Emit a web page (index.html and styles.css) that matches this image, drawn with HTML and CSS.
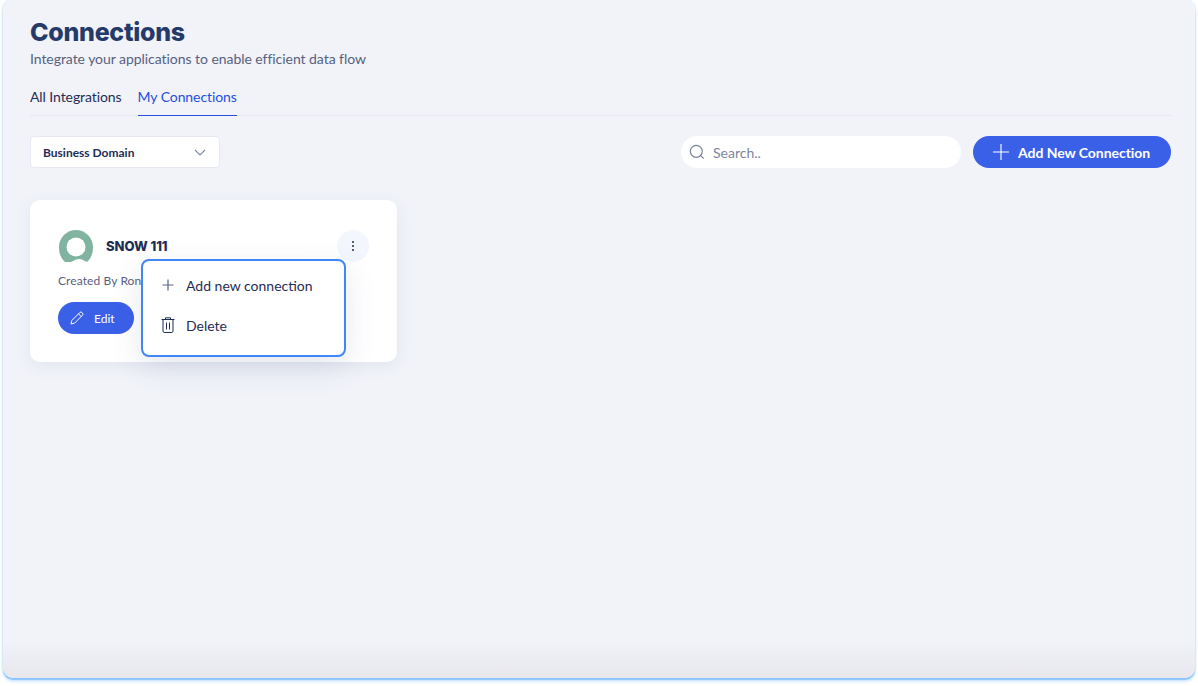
FILE: index.html
```html
<!DOCTYPE html>
<html lang="en">
<head>
    <meta charset="UTF-8">
    <meta name="viewport" content="width=device-width, initial-scale=1.0">
    <title>Connections</title>
    <link rel="stylesheet" href="styles.css">
</head>
<body>

    <div class="panel">
        <!-- Header -->
        <h1>Connections</h1>
        <p class="subtitle">Integrate your applications to enable efficient data flow</p>

        <!-- Tabs -->
        <div class="tabs">
            <span class="tab">All Integrations</span>
            <span class="tab active">My Connections</span>
        </div>

        <!-- Toolbar -->
        <div class="toolbar">
            <div class="select">
                <span>Business Domain</span>
                <svg width="12" height="7" viewBox="0 0 12 7" fill="none" stroke="#7d88a3" stroke-width="1.1"><path d="M1 1l5 5 5-5"/></svg>
            </div>
            <div class="search">
                <svg width="16" height="16" viewBox="0 0 16 16" fill="none" stroke="#7b849b" stroke-width="1.2"><circle cx="7.3" cy="7.3" r="6"/><path d="M11.7 11.7l3 3"/></svg>
                <span>Search..</span>
            </div>
            <div class="add-btn">
                <svg width="16" height="16" viewBox="0 0 16 16" fill="none" stroke="#fff" stroke-width="1.1"><path d="M8 0v16M0 8h16"/></svg>
                <span>Add New Connection</span>
            </div>
        </div>

        <!-- Card -->
        <div class="card">
            <div class="card-head">
                <svg class="avatar" width="34" height="32" viewBox="0 0 34 32">
                    <path fill="#80b4a0" d="M6 32C2 28.500 0 23.500 0 17 0 7.600 7.600 0 17 0s17 7.600 17 17c0 6.500-2 11.500-6 15-2-.8-3.500-1.600-5-2.500-1.500-.8-3.500-.8-6 0-1.500.9-3 1.700-5 2.500-1 0-3 0-5 0z"/>
                    <circle cx="17" cy="17" r="9.500" fill="#fff"/>
                </svg>
                <span class="card-name">SNOW 111</span>
                <div class="dots"><i></i><i></i><i></i></div>
            </div>
            <p class="created">Created By Ron</p>
            <div class="edit-btn">
                <svg width="14" height="14" viewBox="0 0 14 14" fill="none" stroke="#fff" stroke-width="1"><path d="M1 13l.8-3.500L9.800 1.500a1.500 1.500 0 0 1 2.100 0l.6.6a1.500 1.500 0 0 1 0 2.100L4.500 12.200zM8.500 2.800l2.700 2.700"/></svg>
                <span>Edit</span>
            </div>

            <!-- Menu -->
            <div class="menu">
                <div class="menu-item">
                    <svg width="14" height="14" viewBox="0 0 14 14" fill="none" stroke="#5a6584" stroke-width="1.200"><path d="M7 1.500v11M1.500 7h11"/></svg>
                    <span>Add new connection</span>
                </div>
                <div class="menu-item">
                    <svg width="14" height="16" viewBox="0 0 14 16" fill="none" stroke="#1f2d55" stroke-width="1"><path d="M.500 2.500h13M4.500 2.500V.8h5v1.700M2 2.500v11.700c0 .7.500 1.300 1.200 1.300h7.600c.7 0 1.200-.6 1.200-1.300V2.500M5.500 5.500v7M8.500 5.500v7"/></svg>
                    <span>Delete</span>
                </div>
            </div>
        </div>
    </div>

</body>
</html>
```

FILE: styles.css
```css
* {
    margin: 0;
    padding: 0;
    box-sizing: border-box;
}
body {
    height: 686px;
    background: #fff;
    font-family: "Lato", Arial, sans-serif;
    color: #1f2d55;
    overflow: hidden;
}
.panel {
    height: 678px;
    margin: 0 3px;
    padding: 16px 24px 0 27px;
    background: linear-gradient(to bottom, #f1f3f9 0, #f1f3f9 640px, #e7e7ec 678px);
    border-radius: 10px;
    box-shadow: 0 2px 1px #8cc4ff, 0 4px 3px #d5e9ff, 0 0 2px 1px #dcecff;
}
h1 {
    font-family: "Inter", sans-serif;
    font-size: 25px;
    line-height: 32px;
    font-weight: 800;
    letter-spacing: -0.3px;
    color: #263a69;
}
.subtitle {
    margin-top: 2px;
    font-size: 14px;
    line-height: 18px;
    letter-spacing: -0.05px;
    color: #57617f;
}
.tabs {
    display: flex;
    gap: 16px;
    margin-top: 18px;
    border-bottom: 1px solid #e4e8f4;
}
.tab {
    height: 29px;
    padding-top: 2px;
    font-size: 14px;
    line-height: 18px;
    letter-spacing: -0.08px;
    color: #1f2d55;
}
.tab.active {
    color: #2450dc;
    border-bottom: 1px solid #2450dc;
    margin-bottom: -1px;
    height: 30px;
}
.toolbar {
    display: flex;
    align-items: center;
    margin-top: 20px;
}
.select {
    display: flex;
    align-items: center;
    justify-content: space-between;
    width: 190px;
    height: 32px;
    padding: 0 13px 0 12px;
    background: #fff;
    border: 1px solid #e6e9f3;
    border-radius: 4px;
    font-size: 12px;
    font-weight: 700;
}
.search {
    display: flex;
    align-items: center;
    gap: 8px;
    width: 280px;
    height: 32px;
    margin-left: auto;
    padding-left: 8px;
    background: #fff;
    border-radius: 16px;
    font-size: 14px;
    color: #7d869e;
}
.add-btn {
    display: flex;
    align-items: center;
    gap: 9px;
    width: 198px;
    height: 32px;
    margin-left: 12px;
    padding-left: 20px;
    background: #3b60e8;
    border-radius: 16px;
    font-size: 14px;
    font-weight: 700;
    letter-spacing: -0.05px;
    color: #fff;
}
.card {
    position: relative;
    width: 367px;
    height: 162px;
    margin-top: 32px;
    padding: 30px 28px 0;
    background: #fff;
    border-radius: 10px;
    box-shadow: 0 4px 16px rgba(60, 75, 130, 0.08);
}
.card-head {
    display: flex;
    align-items: center;
    height: 32px;
}
.avatar {
    margin-left: 1px;
}
.card-name {
    margin-left: 13px;
    font-family: "Inter", sans-serif;
    font-size: 13px;
    font-weight: 800;
    letter-spacing: -0.05px;
    color: #1f2d55;
}
.dots {
    display: flex;
    flex-direction: column;
    align-items: center;
    justify-content: center;
    gap: 2px;
    width: 32px;
    height: 32px;
    margin-left: auto;
    background: #f3f6fd;
    border-radius: 50%;
}
.dots i {
    width: 2px;
    height: 2px;
    background: #1f2d55;
    border-radius: 50%;
}
.created {
    margin-top: 11px;
    font-size: 12px;
    line-height: 16px;
    letter-spacing: 0.1px;
    color: #57617f;
}
.edit-btn {
    display: flex;
    align-items: center;
    gap: 10px;
    width: 76px;
    height: 32px;
    margin-top: 13px;
    padding-left: 12px;
    background: #3b60e8;
    border-radius: 16px;
    font-size: 12px;
    color: #fff;
}
.menu {
    position: absolute;
    left: 111px;
    top: 59px;
    width: 205px;
    height: 98px;
    padding: 4px 0 0 18px;
    background: #fff;
    border: 2px solid #3f87f5;
    border-radius: 8px;
    box-shadow: 0 10px 30px rgba(60, 75, 130, 0.13);
}
.menu-item {
    display: flex;
    align-items: center;
    gap: 11px;
    height: 40px;
    font-size: 14px;
    color: #1f2d55;
}
```
